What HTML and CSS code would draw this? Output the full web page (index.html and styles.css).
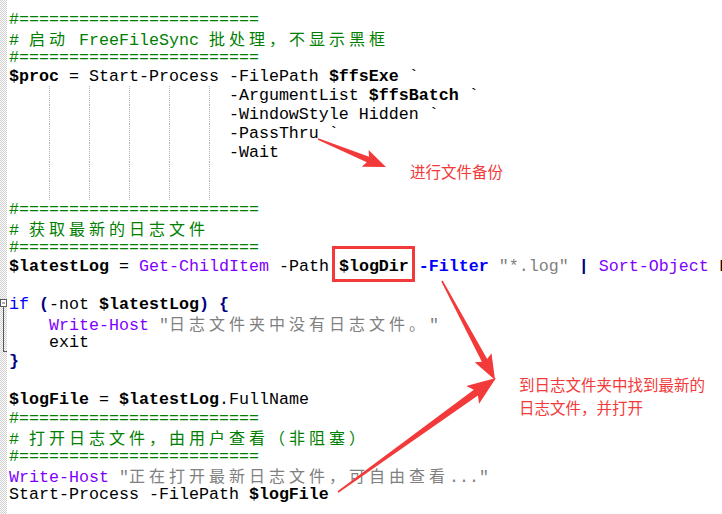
FILE: index.html
```html
<!doctype html>
<html>
    <head>
        <title>ffs-batch.ps1</title>
        <link rel="stylesheet" href="styles.css">
    </head>
    <body>
        <div class="editor">
            <div class="gutter">
                <svg class="fold" width="7" height="514" viewBox="0 0 7 514">
                    <defs>
                        <pattern id="dots" width="2" height="2" patternUnits="userSpaceOnUse">
                            <rect width="2" height="2" fill="#ffffff"/>
                            <rect width="1" height="1" fill="#cfcfcf"/>
                            <rect x="1" y="1" width="1" height="1" fill="#cfcfcf"/>
                        </pattern>
                    </defs>
                    <rect width="7" height="514" fill="url(#dots)"/>
                    <!-- fold marker for the if block -->
                    <rect x="0.5" y="299.5" width="6" height="7" fill="#ffffff" stroke="#5a5a5a"/>
                    <rect x="2" y="302.5" width="3" height="1" fill="#5a5a5a"/>
                    <rect x="3" y="307" width="1" height="45" fill="#5a5a5a"/>
                    <rect x="3" y="351" width="4" height="1" fill="#5a5a5a"/>
                </svg>
            </div>

            <div class="code">
<div class="line"><span class="c">#========================</span></div>
<div class="line"><span class="c"># <span class="z">启动</span> FreeFileSync <span class="z">批处理，不显示黑框</span></span></div>
<div class="line"><span class="c">#========================</span></div>
<div class="line"><span class="v">$proc</span> = Start-Process -FilePath <span class="v">$ffsExe</span> `</div>
<div class="line guides">                      -ArgumentList <span class="v">$ffsBatch</span> `</div>
<div class="line guides">                      -WindowStyle Hidden `</div>
<div class="line guides">                      -PassThru `</div>
<div class="line guides">                      -Wait</div>
<div class="line guides"></div>
<div class="line guides"></div>
<div class="line"><span class="c">#========================</span></div>
<div class="line"><span class="c"># <span class="z">获取最新的日志文件</span></span></div>
<div class="line"><span class="c">#========================</span></div>
<div class="line"><span class="v">$latestLog</span> = <span class="k">Get-ChildItem</span> -Path <span class="v">$logDir</span> <span class="fl">-Filter</span> <span class="s">"*.log"</span> <span class="op">|</span> <span class="k">Sort-Object</span> LastWriteTime -Descending</div>
<div class="line"></div>
<div class="line"><span class="kw">if</span> <span class="op">(</span>-not <span class="v">$latestLog</span><span class="op">)</span> <span class="op">{</span></div>
<div class="line">    <span class="k">Write-Host</span> <span class="s">"<span class="z">日志文件夹中没有日志文件。</span>"</span></div>
<div class="line">    exit</div>
<div class="line"><span class="op">}</span></div>
<div class="line"></div>
<div class="line"><span class="v">$logFile</span> = <span class="v">$latestLog</span>.FullName</div>
<div class="line"><span class="c">#========================</span></div>
<div class="line"><span class="c"># <span class="z">打开日志文件，由用户查看（非阻塞）</span></span></div>
<div class="line"><span class="c">#========================</span></div>
<div class="line"><span class="k">Write-Host</span> <span class="s">"<span class="z">正在打开最新日志文件，可自由查看</span>..."</span></div>
<div class="line">Start-Process -FilePath <span class="v">$logFile</span></div>
            </div>
        </div>

        <!-- annotations drawn over the screenshot -->
        <svg class="marks" width="722" height="514" viewBox="0 0 722 514">
            <rect x="333.5" y="247.5" width="80" height="33" fill="none" stroke="#f33a3a" stroke-width="3"/>
            <polygon fill="#f33a3a" transform="translate(318 139) rotate(22.4)"
                points="0,-0.7 54,-3 51,-9 73.5,0 51,9 54,3 0,0.7"/>
            <polygon fill="#f33a3a" transform="translate(442 281) rotate(61.8)"
                points="0,-0.8 90,-3 87,-9.5 112.3,0 87,9.5 90,3 0,0.8"/>
            <polygon fill="#f33a3a" transform="translate(338 492) rotate(-35.8)"
                points="0,-0.8 170,-3.5 166,-11 194.8,0 166,11 170,3.5 0,0.8"/>
        </svg>
        <div class="note note-backup">进行文件备份</div>
        <div class="note note-open">到日志文件夹中找到最新的<br>日志文件，并打开</div>
    </body>
</html>
```

FILE: styles.css
```css
body {
    margin: 0;
    padding: 0;
    width: 722px;
    height: 514px;
    overflow: hidden;
    background-color: #ffffff;
    position: relative;
}

.editor {
    display: flex;
    height: 514px;
}

.gutter {
    width: 7px;
    flex: none;
    display: flex;
}

.fold {
    display: block;
    flex: none;
}

.code {
    flex: 1;
    min-width: 0;
    padding: 10px 0 0 2px;
    font-family: 'Liberation Mono', 'Noto Sans CJK SC', monospace;
    font-size: 16.667px;
    color: #000000;
    overflow: hidden;
}

.line {
    height: 19px;
    line-height: 19px;
    white-space: pre;
}

/* dotted indent guides every 4 columns */
.guides {
    background-image:
        repeating-linear-gradient(#b4b4b4 0 1px, transparent 1px 2px),
        repeating-linear-gradient(#b4b4b4 0 1px, transparent 1px 2px),
        repeating-linear-gradient(#b4b4b4 0 1px, transparent 1px 2px),
        repeating-linear-gradient(#b4b4b4 0 1px, transparent 1px 2px),
        repeating-linear-gradient(#b4b4b4 0 1px, transparent 1px 2px);
    background-size: 1px 2px;
    background-repeat: repeat-y;
    background-position: 40px 0, 80px 0, 120px 0, 160px 0, 200px 0;
}

.z {
    font-family: 'Noto Sans CJK SC', sans-serif;
    font-size: 16px;
    line-height: 19px;
    letter-spacing: 4px;
}

.c { color: #008000; }
.v { font-weight: bold; }
.k { color: #8000ff; }
.s { color: #808080; }
.kw { color: #0000ff; }
.op { color: #000080; font-weight: bold; }
.fl { color: #0000ff; font-weight: bold; }

.marks {
    position: absolute;
    left: 0;
    top: 0;
    pointer-events: none;
}

.note {
    position: absolute;
    font-family: 'Noto Sans CJK SC', sans-serif;
    font-size: 15.5px;
    color: #f33a3a;
    line-height: 23px;
    white-space: nowrap;
}

.note-backup {
    left: 410px;
    top: 160px;
}

.note-open {
    left: 519px;
    top: 373px;
}
```
